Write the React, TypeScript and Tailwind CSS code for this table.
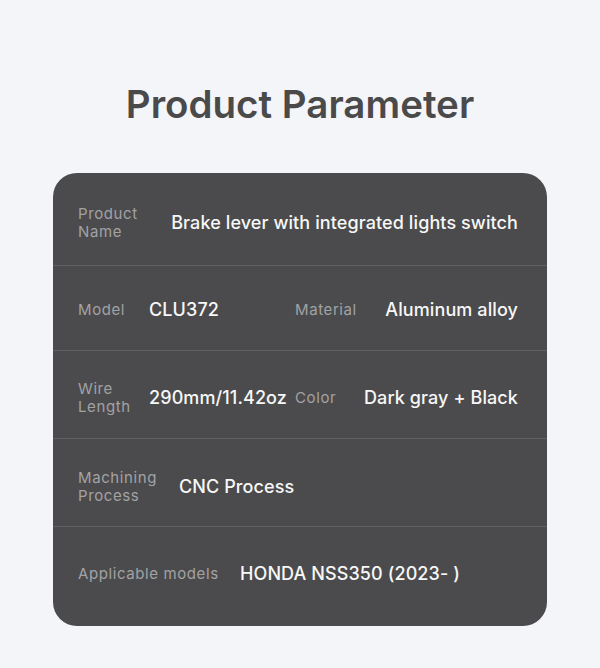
const font = { fontFamily: 'Inter, "Open Sans", sans-serif' }

function Label({ children, className = '' }: { children: React.ReactNode; className?: string }) {
  return (
    <span className={`shrink-0 text-[15px] leading-[18px] tracking-[0.6px] text-[#a2a2a4] ${className}`}>
      {children}
    </span>
  )
}

function Value({ children, className = '' }: { children: React.ReactNode; className?: string }) {
  return (
    <span className={`whitespace-nowrap text-[18px] font-medium leading-6 tracking-[0.1px] text-[#f7f7f7] ${className}`}>
      {children}
    </span>
  )
}

export default function App() {
  return (
    <div className="min-h-[668px] w-[600px] bg-[#f4f5f9] pt-[81px]" style={font}>
      <h1 className="text-center text-[38.5px] font-semibold leading-[46px] text-[#4a4a4b]">Product Parameter</h1>

      <div className="mx-[53px] mt-[46px] overflow-hidden rounded-[24px] bg-[#4b4b4d]">
        <div className="flex h-[93px] items-center border-b border-[#5f5f61] pl-[25px] pr-[29px] pt-[8px]">
          <Label className="w-[62px]">Product Name</Label>
          <Value className="ml-auto">Brake lever with integrated lights switch</Value>
        </div>

        <div className="grid h-[85px] grid-cols-[217px_1fr] items-center border-b border-[#5f5f61] pl-[25px] pr-[29px] pt-[3px]">
          <div className="flex items-center">
            <Label className="w-[71px]">Model</Label>
            <Value>CLU372</Value>
          </div>
          <div className="flex items-center justify-between">
            <Label>Material</Label>
            <Value className="text-[18.5px]">Aluminum alloy</Value>
          </div>
        </div>

        <div className="grid h-[88px] grid-cols-[217px_1fr] items-center border-b border-[#5f5f61] pl-[25px] pr-[29px] pt-[6px]">
          <div className="flex items-center">
            <Label className="w-[71px]">Wire Length</Label>
            <Value>290mm/11.42oz</Value>
          </div>
          <div className="flex items-center justify-between">
            <Label>Color</Label>
            <Value>Dark gray + Black</Value>
          </div>
        </div>

        <div className="flex h-[88px] items-center border-b border-[#5f5f61] pl-[25px] pr-[29px] pt-[8px]">
          <Label className="w-[101px]">Machining Process</Label>
          <Value>CNC Process</Value>
        </div>

        <div className="flex h-[99px] items-center pb-[5px] pl-[25px] pr-[29px]">
          <Label className="w-[162px]">Applicable models</Label>
          <Value>HONDA NSS350 (2023- )</Value>
        </div>
      </div>
    </div>
  )
}
